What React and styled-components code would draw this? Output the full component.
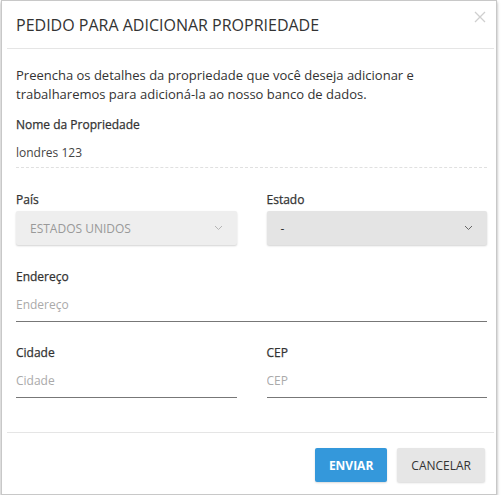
import React from "react";
import styled, { createGlobalStyle } from "styled-components";

const GlobalStyle = createGlobalStyle`
  html, body {
    margin: 0;
    padding: 0;
    background: #fff;
    font-family: "Open Sans", "Noto Sans", sans-serif;
  }
`;

const Modal = styled.div`
  box-sizing: border-box;
  margin-left: 1px;
  width: 496px;
  height: 495px;
  background: #fff;
  border: 1px solid #c8c8c8;
  box-shadow: 0 2px 3px rgba(0, 0, 0, 0.35);
  display: flex;
  flex-direction: column;
`;

const Header = styled.div`
  position: relative;
  margin: 0 2px 0 5px;
  padding: 12px 0 11px 9px;
  border-bottom: 1px solid #e5e5e5;
`;

const Title = styled.h4`
  margin: 0;
  font-size: 16px;
  line-height: 24px;
  font-weight: 400;
  color: #333;
`;

const Close = styled.button`
  position: absolute;
  top: 10px;
  right: 7px;
  width: 14px;
  height: 14px;
  padding: 0;
  border: none;
  background: transparent;
  cursor: pointer;
`;

const Body = styled.div`
  padding: 17px 9px 0 14px;
  flex: 1;
`;

const Intro = styled.p`
  margin: 0;
  font-size: 13px;
  line-height: 19px;
  color: #333;
`;

const Label = styled.div`
  font-size: 12px;
  line-height: 18px;
  font-weight: 500;
  color: #333;
  -webkit-text-stroke: 0.25px #333;
`;

const NameBlock = styled.div`
  margin-top: 12px;
  padding-bottom: 5px;
  border-bottom: 1px dashed #e0e0e0;
`;

const Value = styled.div`
  margin-top: 10px;
  font-size: 12px;
  line-height: 18px;
  color: #444;
`;

const Row = styled.div`
  display: grid;
  grid-template-columns: ${(p) => (p.$single ? "1fr" : "1fr 1fr")};
  column-gap: 30px;
  margin-top: ${(p) => p.$top}px;
`;

const Field = styled.div`
  display: flex;
  flex-direction: column;
`;

const Select = styled.div`
  box-sizing: border-box;
  margin-top: 2px;
  height: 34px;
  padding: 0 14px;
  display: flex;
  align-items: center;
  justify-content: space-between;
  border-radius: 2px;
  background: ${(p) => (p.$disabled ? "#eeeeee" : "#e4e4e4")};
  box-shadow: 0 1px 2px rgba(0, 0, 0, 0.18);
  font-size: 12px;
  color: ${(p) => (p.$disabled ? "#999" : "#333")};
  text-transform: uppercase;
`;

const Input = styled.input`
  box-sizing: border-box;
  margin-top: 1px;
  height: 35px;
  width: 100%;
  padding: 0;
  border: none;
  border-bottom: 1px solid #777;
  outline: none;
  background: transparent;
  font-family: inherit;
  font-size: 12px;
  color: #333;
  &::placeholder {
    color: #aaa;
  }
`;

const Footer = styled.div`
  margin: 0 2px 0 5px;
  padding: 15px 9px 12px 0;
  border-top: 1px solid #e5e5e5;
  display: flex;
  justify-content: flex-end;
  gap: 10px;
`;

const Button = styled.button`
  height: 34px;
  padding: 0 14px;
  border: none;
  border-radius: 2px;
  font-family: inherit;
  font-size: 12px;
  font-weight: ${(p) => (p.$primary ? 700 : 400)};
  color: ${(p) => (p.$primary ? "#fff" : "#333")};
  background: ${(p) => (p.$primary ? "#3498db" : "#e6e6e6")};
  box-shadow: 0 1px 2px rgba(0, 0, 0, 0.15);
  cursor: pointer;
`;

const Chevron = ({ color }) => (
  <svg width="9" height="6" viewBox="0 0 9 6">
    <path d="M1 1l3.5 3.5L8 1" fill="none" stroke={color} strokeWidth="1" />
  </svg>
);

const App = () => {
  return (
    <>
      <GlobalStyle />
      <Modal>
        <Header>
          <Title>PEDIDO PARA ADICIONAR PROPRIEDADE</Title>
          <Close aria-label="Fechar">
            <svg width="12" height="12" viewBox="0 0 12 12">
              <path d="M1 1l10 10M11 1L1 11" stroke="#cfcfcf" strokeWidth="1.3" />
            </svg>
          </Close>
        </Header>
        <Body>
          <Intro>
            Preencha os detalhes da propriedade que você deseja adicionar e
            trabalharemos para adicioná-la ao nosso banco de dados.
          </Intro>
          <NameBlock>
            <Label>Nome da Propriedade</Label>
            <Value>londres 123</Value>
          </NameBlock>
          <Row $top={23}>
            <Field>
              <Label>País</Label>
              <Select $disabled>
                ESTADOS UNIDOS
                <Chevron color="#b5b5b5" />
              </Select>
            </Field>
            <Field>
              <Label>Estado</Label>
              <Select>
                -
                <Chevron color="#666" />
              </Select>
            </Field>
          </Row>
          <Row $single $top={23}>
            <Field>
              <Label>Endereço</Label>
              <Input placeholder="Endereço" />
            </Field>
          </Row>
          <Row $top={22}>
            <Field>
              <Label>Cidade</Label>
              <Input placeholder="Cidade" />
            </Field>
            <Field>
              <Label>CEP</Label>
              <Input placeholder="CEP" />
            </Field>
          </Row>
        </Body>
        <Footer>
          <Button $primary>ENVIAR</Button>
          <Button>CANCELAR</Button>
        </Footer>
      </Modal>
    </>
  );
};

export default App;
